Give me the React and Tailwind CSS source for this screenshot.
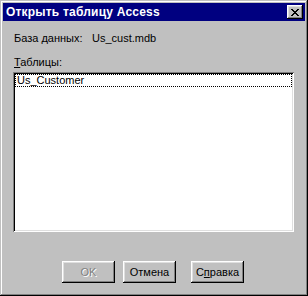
const Btn = ({ children, disabled }) => (
  <div
    className={
      "w-[53px] h-[22px] flex items-center justify-center bg-[#c0c0c0] shadow-[inset_-1px_-1px_#000,inset_1px_1px_#fff,inset_-2px_-2px_#808080,inset_2px_2px_#dfdfdf] " +
      (disabled ? "text-[#808080] [text-shadow:1px_1px_#fff]" : "text-black")
    }
  >
    {children}
  </div>
);

export default function App() {
  return (
    <div className="w-[308px] h-[296px] bg-[#c0c0c0] p-[3px] flex flex-col font-['Liberation_Sans',Arial,sans-serif] text-[11px] leading-[13px] text-black shadow-[inset_-1px_-1px_#000,inset_1px_1px_#c0c0c0,inset_-2px_-2px_#808080,inset_2px_2px_#fff]">
      <div className="h-[18px] bg-[#000080] flex items-center justify-between pl-[3px] pr-[2px]">
        <span className="text-white font-bold text-[12px] tracking-[0.2px]">
          Открыть таблицу Access
        </span>
        <div className="w-[16px] h-[14px] bg-[#c0c0c0] flex items-center justify-center shadow-[inset_-1px_-1px_#000,inset_1px_1px_#fff,inset_-2px_-2px_#808080,inset_2px_2px_#dfdfdf]">
          <svg width="8" height="7" viewBox="0 0 8 7">
            <path
              d="M0 0h2v1h1v1h2v-1h1v-1h2v1h-1v1h-1v1h-1v1h1v1h1v1h1v1h-2v-1h-1v-1h-2v1h-1v1h-2v-1h1v-1h1v-1h1v-1h-1v-1h-1v-1h-1z"
              fill="#000"
            />
          </svg>
        </div>
      </div>
      <div className="flex flex-col flex-1 px-[10px]">
        <div className="flex mt-[11px] pl-[1px]">
          <span className="w-[78px]">База данных:</span>
          <span>Us_cust.mdb</span>
        </div>
        <div className="mt-[11px] pl-[1px]">
          <span className="underline">Т</span>аблицы:
        </div>
        <div className="mt-[3px] w-[281px] h-[160px] bg-white p-[2px] shadow-[inset_1px_1px_#808080,inset_-1px_-1px_#fff,inset_2px_2px_#000,inset_-2px_-2px_#dfdfdf]">
          <div className="h-[13px] border border-dotted border-black pl-[1px] leading-[11px]">
            Us_Customer
          </div>
        </div>
        <div className="flex mt-[29px] pl-[49px]">
          <Btn disabled>OK</Btn>
          <div className="ml-[8px]">
            <Btn>Отмена</Btn>
          </div>
          <div className="ml-[15px]">
            <Btn>
              <span>
                С<span className="underline">п</span>равка
              </span>
            </Btn>
          </div>
        </div>
      </div>
    </div>
  );
}
